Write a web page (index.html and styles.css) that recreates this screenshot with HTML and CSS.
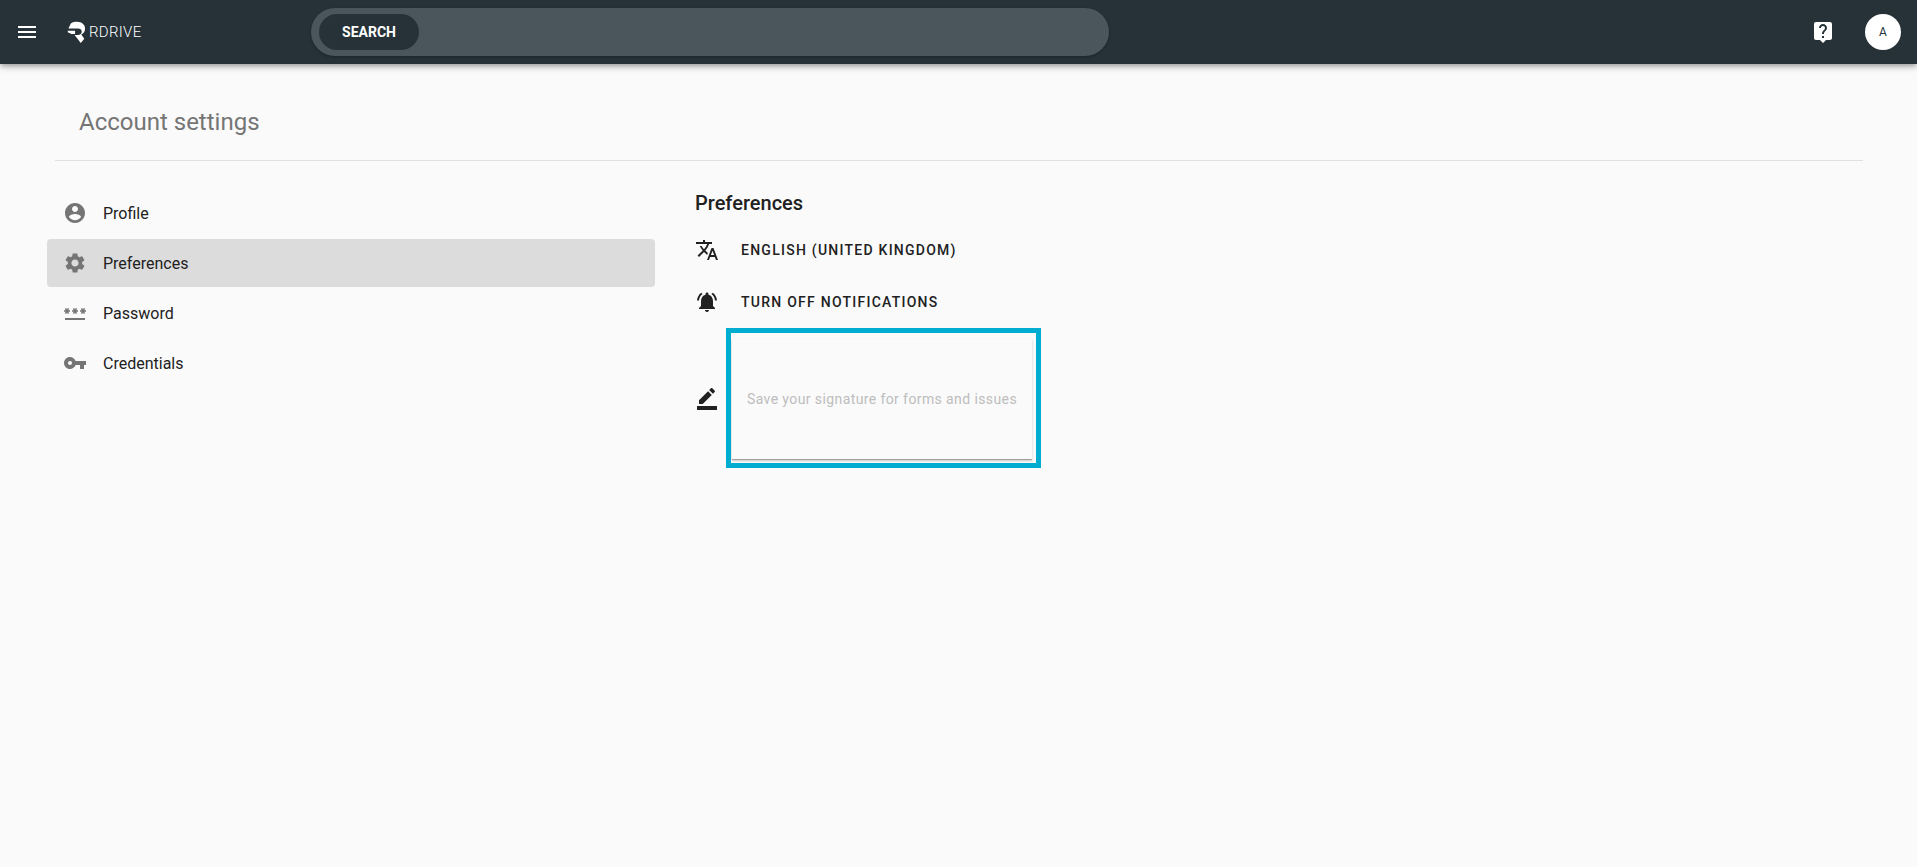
FILE: index.html
```html
<!DOCTYPE html>
<html lang="en">
<head>
<meta charset="utf-8">
<title>Account settings</title>
<link rel="stylesheet" href="styles.css">
</head>
<body>
<header class="topbar">
  <button class="icon-btn menu-btn" aria-label="Menu">
    <svg class="icon" viewBox="0 0 24 24"><path d="M3 18h18v-2H3v2zm0-5h18v-2H3v2zm0-7v2h18V6H3z"/></svg>
  </button>
  <div class="logo">
    <svg class="logo-mark" viewBox="0 0 20 24"><path d="M4 2.5C6 1 8.500 .8 10.500 .8c5 0 8.500 3 8.500 7.200 0 2.800-1.500 5-4 6.200l3.200 4.300-3.700 4.500-6.500-8.500h3.300c2.600 0 4.200-1.200 4.200-3.300 0-2-1.500-3.300-4-3.300H1.500zM.8 10.200h7.700v3.300H4.700l-3.900-1.700z"/></svg>
    <span class="logo-text">RDRIVE</span>
  </div>
  <div class="search">
    <span class="search-btn">SEARCH</span>
  </div>
  <div class="topbar-right">
    <svg class="icon help" viewBox="0 0 24 24"><path d="M19 2H5c-1.110 0-2 .9-2 2v14c0 1.100.89 2 2 2h4l3 3 3-3h4c1.100 0 2-.9 2-2V4c0-1.100-.9-2-2-2zm-6 16h-2v-2h2v2zm2.070-7.750l-.9.920C13.450 11.900 13 12.500 13 14h-2v-.5c0-1.100.45-2.100 1.170-2.830l1.240-1.260c.37-.36.59-.86.59-1.410 0-1.100-.9-2-2-2s-2 .9-2 2H8c0-2.210 1.790-4 4-4s4 1.790 4 4c0 .88-.36 1.680-.93 2.250z"/></svg>
    <div class="avatar">A</div>
  </div>
</header>

<main class="page">
  <h1 class="page-title">Account settings</h1>
  <div class="columns">
    <nav class="side">
      <a class="side-item">
        <svg class="icon" viewBox="0 0 24 24"><path d="M12 2C6.480 2 2 6.480 2 12s4.480 10 10 10 10-4.480 10-10S17.520 2 12 2zm0 3c1.660 0 3 1.340 3 3s-1.340 3-3 3-3-1.340-3-3 1.340-3 3-3zm0 14.200c-2.500 0-4.710-1.280-6-3.220.03-1.990 4-3.080 6-3.080 1.990 0 5.970 1.090 6 3.080-1.290 1.940-3.500 3.220-6 3.220z"/></svg>
        <span>Profile</span>
      </a>
      <a class="side-item active">
        <svg class="icon" viewBox="0 0 24 24"><path d="M19.140 12.940c.04-.3.06-.61.06-.94 0-.32-.02-.64-.07-.94l2.030-1.580c.18-.14.23-.41.12-.61l-1.920-3.320c-.12-.22-.37-.29-.59-.22l-2.390.96c-.5-.38-1.030-.7-1.620-.94l-.36-2.540c-.04-.24-.24-.41-.48-.41h-3.840c-.24 0-.43.17-.47.41l-.36 2.540c-.59.24-1.130.57-1.620.94l-2.390-.96c-.22-.08-.47 0-.59.22L2.740 8.870c-.12.21-.08.47.12.61l2.030 1.580c-.05.3-.09.63-.09.94s.02.64.07.94l-2.030 1.580c-.18.14-.23.41-.12.61l1.920 3.320c.12.22.37.29.59.22l2.390-.96c.5.38 1.030.7 1.620.94l.36 2.540c.05.24.24.41.48.41h3.840c.24 0 .44-.17.47-.41l.36-2.540c.59-.24 1.130-.56 1.620-.94l2.390.96c.22.08.47 0 .59-.22l1.920-3.320c.12-.22.07-.47-.12-.61l-2.010-1.580zM12 15.600c-1.980 0-3.600-1.620-3.600-3.600s1.620-3.600 3.600-3.600 3.600 1.620 3.600 3.600-1.620 3.600-3.600 3.600z"/></svg>
        <span>Preferences</span>
      </a>
      <a class="side-item">
        <svg class="icon" viewBox="0 0 24 24"><path d="M2 17h20v2H2v-2zm1.150-4.050L4 11.470l.85 1.480 1.300-.75-.85-1.480H7v-1.500H5.300l.85-1.470L4.850 7 4 8.470 3.150 7l-1.300.75.85 1.470H1v1.500h1.700l-.85 1.480 1.300.75zm6.700-.75l1.300.75.85-1.480.85 1.480 1.300-.75-.85-1.480H15v-1.500h-1.700l.85-1.470-1.300-.75L12 8.470 11.150 7l-1.300.75.85 1.470H9v1.500h1.700l-.85 1.480zM23 9.220h-1.700l.85-1.470-1.300-.75L20 8.470 19.150 7l-1.300.75.85 1.470H17v1.500h1.700l-.85 1.480 1.300.75.85-1.480.85 1.480 1.300-.75-.85-1.480H23v-1.500z"/></svg>
        <span>Password</span>
      </a>
      <a class="side-item">
        <svg class="icon" viewBox="0 0 24 24"><path d="M12.650 10C11.830 7.670 9.610 6 7 6c-3.310 0-6 2.690-6 6s2.690 6 6 6c2.610 0 4.830-1.670 5.650-4H17v4h4v-4h2v-4H12.650zM7 14c-1.100 0-2-.9-2-2s.9-2 2-2 2 .9 2 2-.9 2-2 2z"/></svg>
        <span>Credentials</span>
      </a>
    </nav>
    <section class="prefs">
      <h2 class="prefs-title">Preferences</h2>
      <div class="pref-row">
        <svg class="icon" viewBox="0 0 24 24"><path d="M12.870 15.070l-2.540-2.510.03-.03c1.740-1.940 2.980-4.170 3.710-6.530H17V4h-7V2H8v2H1v1.990h11.170C11.500 7.920 10.440 9.750 9 11.350 8.070 10.320 7.300 9.190 6.690 8h-2c.73 1.630 1.730 3.170 2.980 4.560l-5.090 5.020L4 19l5-5 3.110 3.110.76-2.040zM18.500 10h-2L12 22h2l1.120-3h4.750L21 22h2l-4.500-12zm-2.620 7l1.620-4.330L19.120 17h-3.240z"/></svg>
        <span class="pref-label">ENGLISH (UNITED KINGDOM)</span>
      </div>
      <div class="pref-row">
        <svg class="icon" viewBox="0 0 24 24"><path d="M7.580 4.080L6.150 2.650C3.750 4.480 2.170 7.300 2.030 10.500h2c.15-2.650 1.510-4.970 3.550-6.420zm12.390 6.420h2c-.15-3.200-1.730-6.020-4.120-7.850l-1.420 1.430c2.020 1.450 3.390 3.770 3.540 6.420zM18 11c0-3.070-1.640-5.640-4.500-6.320V4c0-.83-.67-1.500-1.500-1.500s-1.500.67-1.500 1.500v.68C7.630 5.360 6 7.920 6 11v5l-2 2v1h16v-1l-2-2v-5zm-6 11c.14 0 .27-.01.4-.04.65-.14 1.180-.58 1.440-1.180.1-.24.15-.5.15-.78h-4c.01 1.100.9 2 2.010 2z"/></svg>
        <span class="pref-label">TURN OFF NOTIFICATIONS</span>
      </div>
      <div class="sign-row">
        <svg class="icon" viewBox="0 0 24 24"><path d="M22 24H2v-4h20v4zM13.060 5.190l3.750 3.750L7.750 18H4v-3.750l9.060-9.060zm4.820 2.680-3.750-3.750 1.830-1.830c.39-.39 1.020-.39 1.410 0l2.340 2.340c.39.39.39 1.020 0 1.410l-1.830 1.830z"/></svg>
        <div class="sign-frame">
          <div class="sign-field">Save your signature for forms and issues</div>
        </div>
      </div>
    </section>
  </div>
</main>
</body>
</html>
```

FILE: styles.css
```css
* { box-sizing: border-box; }
html, body { margin: 0; height: 100%; }
body {
  background: #fafafa;
  font-family: Roboto, "Liberation Sans", sans-serif;
  color: #212121;
  overflow: hidden;
}
.icon { width: 24px; height: 24px; display: block; flex: none; fill: currentColor; }

.topbar {
  height: 64px;
  background: #263238;
  color: #fff;
  display: flex;
  align-items: center;
  box-shadow: 0 2px 4px -1px rgba(0,0,0,.2), 0 4px 5px rgba(0,0,0,.14), 0 1px 10px rgba(0,0,0,.12);
  position: relative;
}
.icon-btn { background: none; border: 0; padding: 0; color: inherit; }
.menu-btn { margin-left: 15px; width: 24px; height: 24px; }
.logo { margin-left: 28px; width: 90px; display: flex; align-items: center; gap: 3px; }
.logo-mark { width: 19px; height: 23px; fill: #fff; flex: none; }
.logo-text { font-size: 15px; font-weight: 300; letter-spacing: .3px; line-height: 1; }
.search {
  margin-left: 154px;
  width: 798px;
  height: 48px;
  border-radius: 24px;
  background: #4b555c;
  box-shadow: 0 1px 3px rgba(0,0,0,.3);
  display: flex;
  align-items: center;
  padding-left: 8px;
}
.search-btn {
  width: 100px;
  height: 36px;
  border-radius: 18px;
  background: #263238;
  font-size: 14px;
  font-weight: 700;
  display: flex;
  align-items: center;
  justify-content: center;
}
.topbar-right { margin-left: auto; margin-right: 16px; display: flex; align-items: center; gap: 30px; }
.avatar {
  width: 36px;
  height: 36px;
  border-radius: 50%;
  background: #fff;
  color: #263238;
  font-size: 12px;
  display: flex;
  align-items: center;
  justify-content: center;
}

.page { padding: 0 54px 0 47px; }
.page-title {
  margin: 0 0 0 8px;
  padding: 42px 0 23px 24px;
  height: 97px;
  border-bottom: 1px solid #e0e0e0;
  font-size: 24px;
  line-height: 32px;
  font-weight: 400;
  color: #757575;
}
.columns { display: flex; padding-top: 28px; }
.side { width: 608px; flex: none; display: flex; flex-direction: column; gap: 2px; }
.side-item {
  height: 48px;
  display: flex;
  align-items: center;
  gap: 16px;
  padding-left: 16px;
  border-radius: 4px;
  font-size: 16px;
  color: #212121;
}
.side-item .icon { color: #757575; }
.side-item.active { background: #dcdcdc; }

.prefs { margin-left: 40px; }
.prefs-title { margin: 0; font-size: 20px; font-weight: 500; line-height: 28px; height: 35px; color: #212121; padding-top: 0; }
.pref-row { display: flex; align-items: center; gap: 22px; height: 52px; }
.pref-label { font-size: 14px; font-weight: 500; letter-spacing: 1.25px; color: #212121; }
.sign-row { display: flex; align-items: center; gap: 7px; margin-top: 0; }
.sign-frame { width: 315px; height: 140px; border: 5px solid #00acd0; padding: 6px 4px 3px 1px; }
.sign-field {
  height: 100%;
  border-bottom: 1px solid #9e9e9e;
  box-shadow: 0 1px 2px rgba(0,0,0,.2);
  display: flex;
  align-items: center;
  justify-content: center;
  font-size: 14px;
  letter-spacing: .4px;
  color: #bdbdbd;
}
```
